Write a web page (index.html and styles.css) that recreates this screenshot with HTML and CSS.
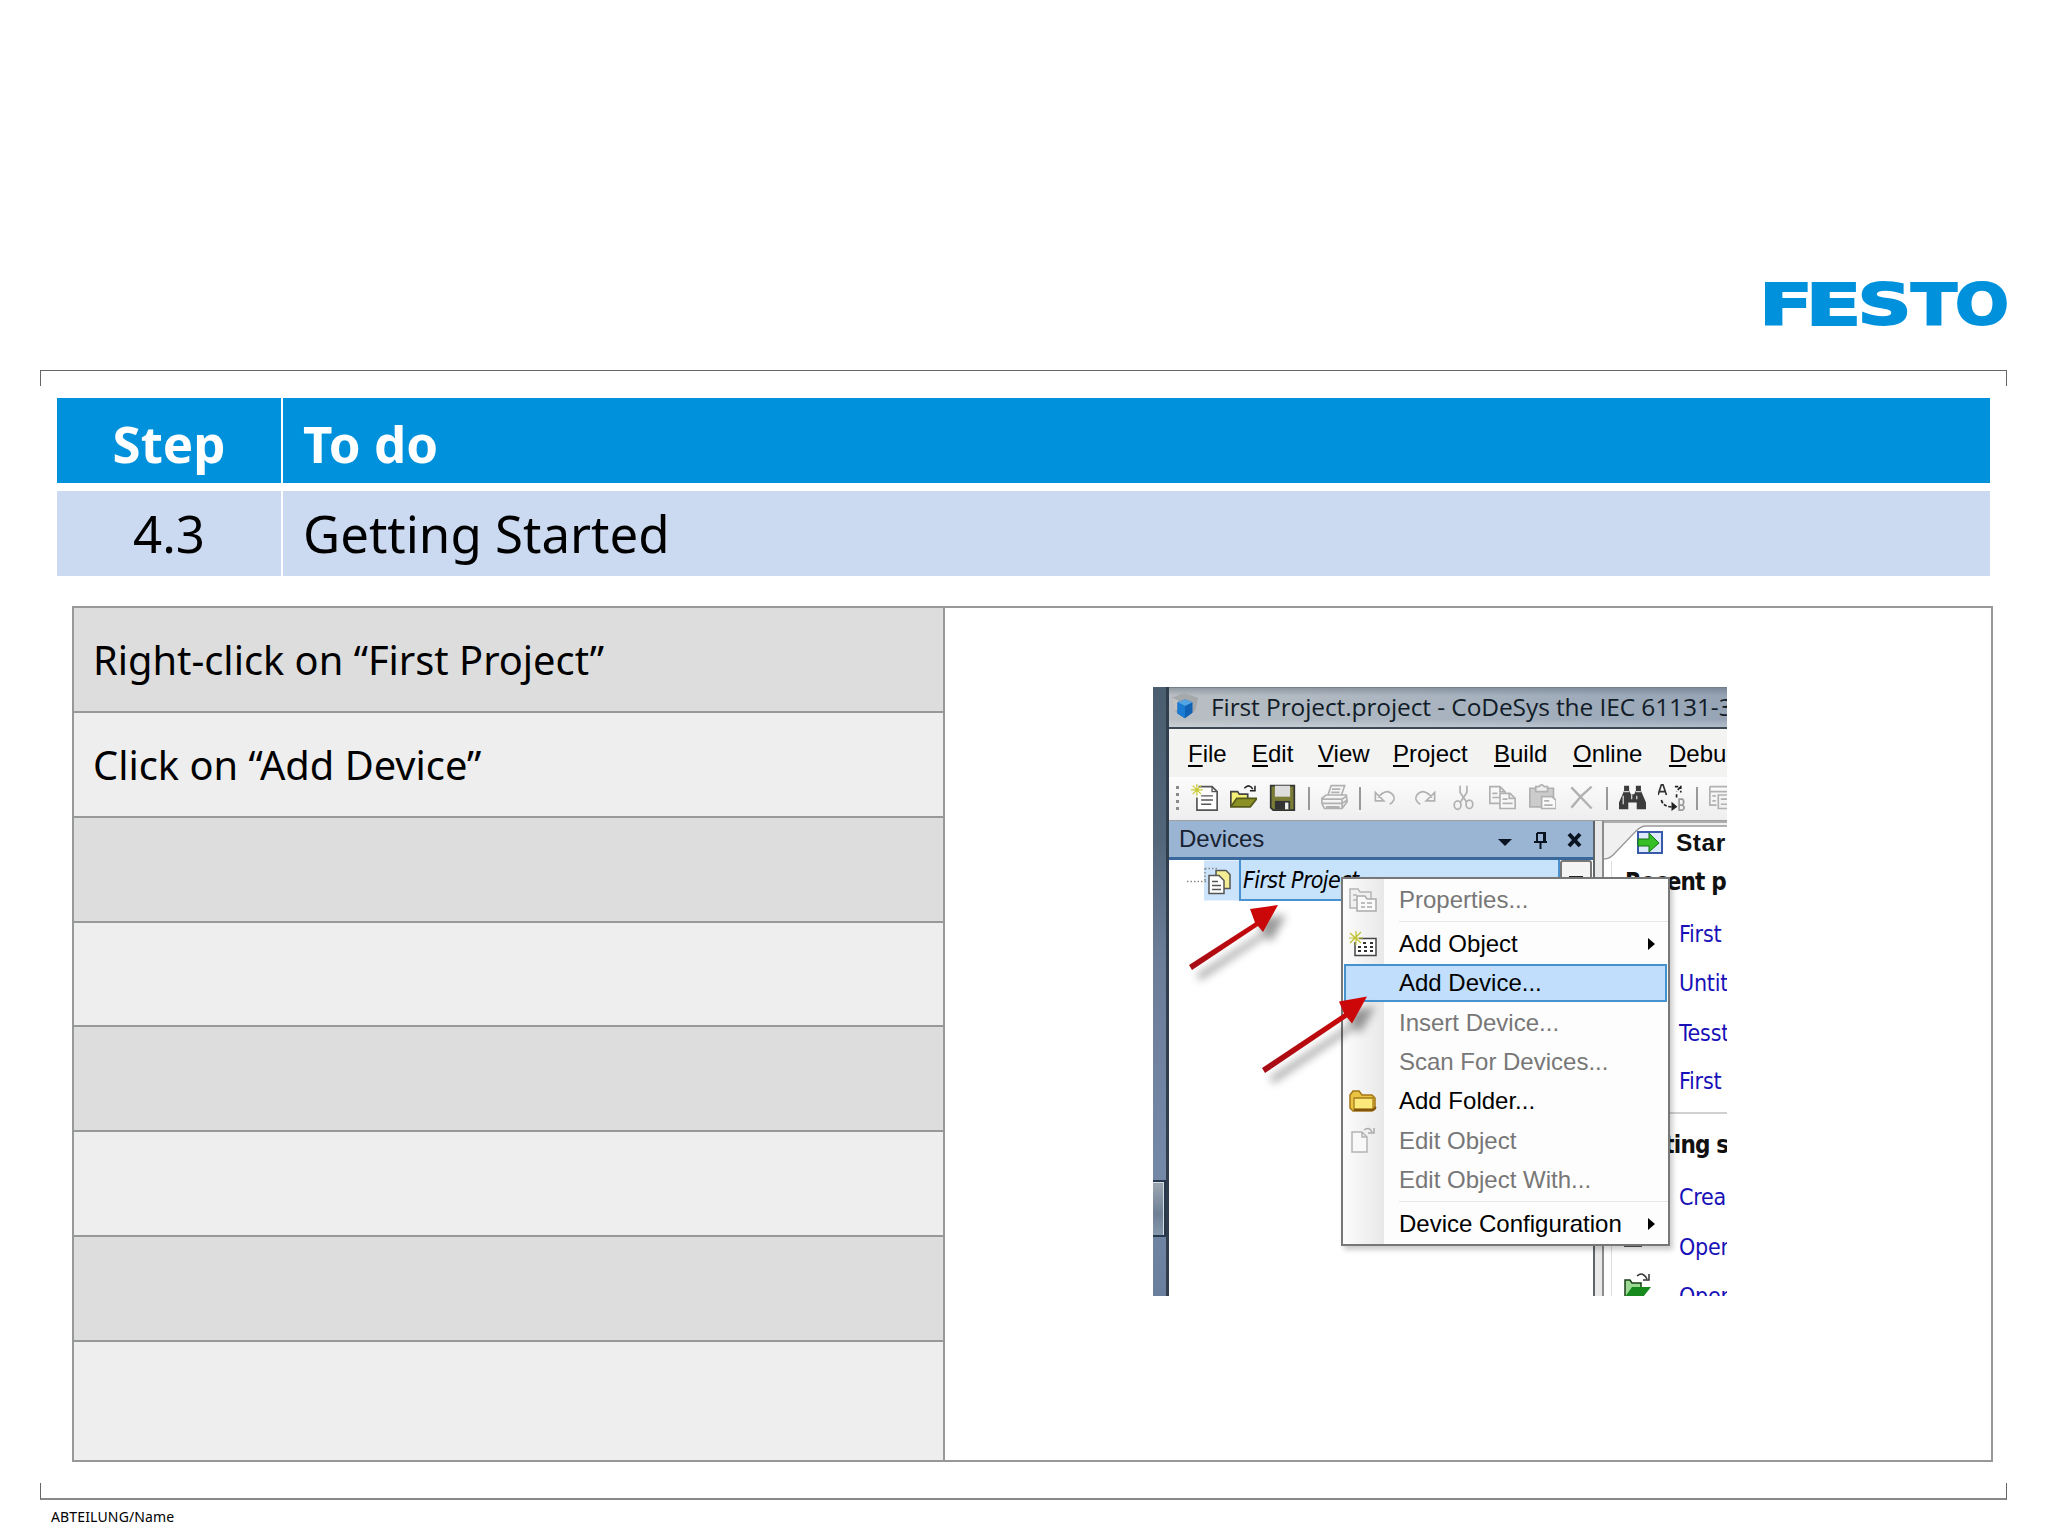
FILE: index.html
```html
<!DOCTYPE html>
<html lang="en">
<head>
<meta charset="utf-8">
<title>Getting Started</title>
<link rel="stylesheet" href="styles.css">
</head>
<body>
<main class="slide">
  <header class="brand">
    <svg class="logo" viewBox="0 0 244 46" role="img" aria-label="FESTO">
      <g class="logo-text">
        <text x="-4" y="43.800" textLength="54" lengthAdjust="spacingAndGlyphs">F</text>
        <text x="42.500" y="43.800" textLength="56" lengthAdjust="spacingAndGlyphs">E</text>
        <text x="94.500" y="43.800" textLength="54" lengthAdjust="spacingAndGlyphs">S</text>
        <text x="148" y="43.800" textLength="46" lengthAdjust="spacingAndGlyphs">T</text>
        <text x="192" y="43.800" textLength="54" lengthAdjust="spacingAndGlyphs">O</text>
      </g>
    </svg>
  </header>
  <div class="bracket bracket-top"></div>
  <section class="steps">
    <div class="cell head center">Step</div><div class="cell head">To do</div>
    <div class="cell center">4.3</div><div class="cell">Getting Started</div>
  </section>
  <section class="board">
    <div class="tasks">
      <div class="task">Right-click on “First Project”</div>
      <div class="task">Click on “Add Device”</div>
      <div class="task"></div><div class="task"></div><div class="task"></div>
      <div class="task"></div><div class="task"></div><div class="task"></div>
    </div>
    <div class="figure">
      <div class="app">
        <div class="edge"><div class="edge-block"></div></div>
        <div class="window">
          <div class="titlebar">
            <svg class="cube" viewBox="0 0 32 32"><path d="M2 6L15 1l15 5-3 14-12 8L5 20z" fill="#a5a9ac"/><path d="M2 6l7 3v10l-4 1z" fill="#c2c2c0"/><path d="M8 11l8-3 8 3v11l-8 6-8-5z" fill="#1262b4"/><path d="M8 11l8-3 8 3-8 4z" fill="#54a5e4"/><path d="M8 11l8 4v13l-8-5z" fill="#1a7bd3"/></svg>
            <span>First Project.project - CoDeSys the IEC 61131-3</span>
          </div>
          <nav class="menubar"><span><u>F</u>ile</span><span><u>E</u>dit</span><span><u>V</u>iew</span><span><u>P</u>roject</span><span><u>B</u>uild</span><span><u>O</u>nline</span><span><u>D</u>ebu</span></nav>
          <div class="toolbar">
            <div class="grip"></div>
            <i><svg viewBox="0 0 16 16"><path d="M4.500 1.500h8l3 3v11h-12V8" fill="#fff" stroke="#555"/><path d="M12.500 1.500v3h3M6 7h7M6 9.500h7M6 12h6" fill="none" stroke="#555" stroke-width=".8"/><path d="M3.500 0v7M0 3.500h7M1 1l5 5M6 1L1 6" stroke="#c9c832" stroke-width=".7"/></svg></i>
            <i><svg viewBox="0 0 16 16"><path d="M.5 13.500v-9h4l1 1.500h5v3" fill="#f5ef78" stroke="#444"/><path d="M.5 13.500L4 8.500h12l-4 5z" fill="#8b9025" stroke="#55591a"/><path d="M8.500 2.500q3-3 5 .5M14.800 1v3h-3" fill="none" stroke="#222" stroke-width=".9"/></svg></i>
            <i><svg viewBox="0 0 16 16"><path d="M1 1h14v14.500H2.500L1 14z" fill="#7b7d36" stroke="#333"/><path d="M3.500 1h9v6.500h-9z" fill="#ddd"/><path d="M3.500 10h9v5h-9z" fill="#333"/><path d="M9.500 11h2v4h-2z" fill="#eee"/></svg></i>
            <b></b>
            <i><svg class="dim" viewBox="0 0 16 16"><path d="M4 7l2-6h8l-2 6M6.500 3h5M6 5h5M.5 8.500L3 6.500h12l.5 4-3 4H2l-1.500-3zM.5 9h12l3-2M1 11.500h11.500l3-2M3 13.500h8M12.500 9v5"/></svg></i>
            <b></b>
            <i><svg class="dim" viewBox="0 0 16 16"><path d="M3.500 8q5-6 9-1.500 2 3-2 5.500M2 5v5h5z"/></svg></i>
            <i><svg class="dim" viewBox="0 0 16 16"><path d="M12.500 8q-5-6-9-1.500-2 3 2 5.500M14 5v5H9z"/></svg></i>
            <i><svg class="dim" viewBox="0 0 16 16"><path d="M6 1v4l4 6M10 1v4l-4 6"/><ellipse cx="4.500" cy="12.500" rx="2" ry="2.500"/><ellipse cx="11.500" cy="12" rx="2" ry="2.500"/></svg></i>
            <i><svg class="dim" viewBox="0 0 16 16"><path d="M.5 1.500h6l3 3v7h-9zM6.500 1.500v3h3M2 5.500h3M2 8h5"/><path d="M6.500 5.500h6l3 3v6h-9z" fill="#f7f7f7"/><path d="M12 5.500v3h3M8 9h3M8 11.500h6"/></svg></i>
            <i><svg class="dim" viewBox="0 0 16 16"><path d="M.5 2.500h14v11H.5z" fill="#ccc"/><path d="M4 4.500v-3h2q1.500-2 3 0h2v3z" fill="#eee"/><path d="M7.500 7.500h6l2.500 2v5H7.500z" fill="#fafafa"/><path d="M9 10h3M9 12.500h5"/></svg></i>
            <i><svg class="dim" viewBox="0 0 16 16"><path d="M2 2l12 12.500M14 1.500L8 7 2 14" stroke-width="1.400"/></svg></i>
            <b></b>
            <i><svg viewBox="0 0 16 16"><path d="M3 1h3v3l1 2h2l1-2V1h3v3l3 7v4h-5.500v-4h-5v4H0v-4l3-7z" fill="#3c3c3c"/><path d="M3 4.500h3M10 4.500h3M2.500 7v5M10.500 7v2M7.500 6v3" stroke="#d0d0d0" stroke-width=".8"/></svg></i>
            <i><svg viewBox="0 0 16 16"><path d="M0 6.500L2 .5h1l2 6M1 4.500h3" fill="none" stroke="#333"/><path d="M10 1.500h3.500V5M13 2l-2 2.500M11 6v2M2 9.500q1 4 6 4" fill="none" stroke="#222" stroke-dasharray="2 1"/><path d="M8 10.500l3.500 3-3.500 2.500z" fill="#222"/><path d="M12.500 9v6.500h2q2-1.500 0-3h-2 2q1.500-2 0-3.500z" fill="none" stroke="#999"/></svg></i>
            <b></b>
            <i><svg class="dim" viewBox="0 0 16 16"><path d="M.5 1.500h12v4M.5 1.500v11h4M.5 4.500h12M5.500 6.500h10v8h-10zM7 9h7M7 12h7M2 7h2M2 10h2"/></svg></i>
          </div>
          <div class="work">
            <div class="devices">
              <div class="pane-head"><span>Devices</span>
                <svg viewBox="0 0 90 24"><path d="M1 11h14l-7 7z" fill="#0b1522"/><path d="M40 5h8v9M40 5v9M37 14h13M43.500 14v7M47 5v9" fill="none" stroke="#0b1522" stroke-width="2"/><path d="M72 6l11 12M83 6L72 18" stroke="#0b1522" stroke-width="4"/></svg>
              </div>
              <div class="tree">
                <svg class="node" viewBox="0 0 53 40"><path d="M18 0h35v40H18z" fill="#cbe4fb"/><path d="M1 21h20M19 8h13M19 8v12" fill="none" stroke="#888" stroke-width="1.500" stroke-dasharray="1.500 2"/><path d="M30 10h10l4 4v14H30z" fill="#f3ee93" stroke="#555" stroke-width="1.500"/><path d="M23 15h10l5 5v13H23z" fill="#fff" stroke="#555" stroke-width="1.500"/><path d="M26 21h6M26 25h9M26 29h9" stroke="#555" stroke-width="1.500"/></svg>
                <div class="node-name">First Project</div>
                <div class="drop"></div>
              </div>
            </div>
            <div class="page">
              <svg class="tab" viewBox="0 0 124 40"><path d="M0 0h124v5H42q-4 0-8 4L10 33q-5 5-10 5z" fill="#f0f0f0"/><path d="M0 1h124" stroke="#999" stroke-width="1.500"/><path d="M0 38q6 0 11-6L32 10q5-5 10-5h82" fill="none" stroke="#999" stroke-width="1.300"/><path d="M34 11h24v21H34z" fill="#dceafa" stroke="#3859ac" stroke-width="2"/><path d="M34 18h11v-6l10 10-10 9v-6H34z" fill="#35bf24" stroke="#167310"/></svg>
              <span class="t tab-name">Star</span>
              <span class="t recent">Recent p</span>
              <span class="t l1">First</span><span class="t l2">Untitl</span><span class="t l3">Tesst</span><span class="t l4">First</span>
              <hr>
              <span class="t getting">Getting s</span>
              <span class="t l5">Crea</span><span class="t l6">Open</span><span class="t l7">Open</span>
              <svg class="folder" viewBox="0 0 28 54"><path d="M0 3h18" stroke="#555" stroke-width="2"/><path d="M1 54V37h5l2 3h9v7" fill="#9bd992" stroke="#173f16" stroke-width="1.500"/><path d="M1 54l7-10h19l-8 10z" fill="#168a1c"/><path d="M13 33q6-5 10 3M25 31v6h-6" fill="none" stroke="#333" stroke-width="1.500"/></svg>
            </div>
          </div>
        </div>
        <div class="context">
          <div class="item off"><svg viewBox="0 0 28 26"><path d="M1 2h8l2 3h11v16H1zM4 8h4M4 13h4" fill="#f0f0f0" stroke="#b5b5b5" stroke-width="1.500"/><path d="M8 9h8l2 3h9v12H8z" fill="#fafafa" stroke="#aaa" stroke-width="1.500"/><path d="M12 16h4M18 16h5M12 20h4M18 20h5" stroke="#aaa" stroke-width="1.500"/></svg>Properties...</div>
          <div class="sep"></div>
          <div class="item sub"><svg viewBox="0 0 28 26"><path d="M10 7.500h17v17H6V11" fill="#fff" stroke="#444" stroke-width="1.500"/><path d="M14 12h3M21 12h3M9 16h3M15 16h3M21 16h3M9 20h3M15 20h3M21 20h3" stroke="#333" stroke-width="2"/><path d="M7 0v14M0 7h14M1 2l11 10M12 1L1 12" stroke="#bfc02e" stroke-width="1.200"/></svg>Add Object</div>
          <div class="item hot"><svg viewBox="0 0 28 26"></svg>Add Device...</div>
          <div class="item off"><svg viewBox="0 0 28 26"></svg>Insert Device...</div>
          <div class="item off"><svg viewBox="0 0 28 26"></svg>Scan For Devices...</div>
          <div class="item"><svg viewBox="0 0 28 26"><path d="M1 20V7l3-4h6l3 4h10l3 3v11l-3 2H4z" fill="#eac544" stroke="#a57619" stroke-width="1.500"/><path d="M5 10h19v11H5z" fill="#fbe97c" stroke="#a57b19" stroke-width="1.300"/><path d="M5 22h19l3-3" fill="none" stroke="#80560e" stroke-width="2"/></svg>Add Folder...</div>
          <div class="item off"><svg viewBox="0 0 28 26"><path d="M3 5h10l5 5v15H3zM13 5v5h5" fill="#f8f8f8" stroke="#b4b4b4" stroke-width="1.500"/><path d="M15 3q5-4 8 2M25 1v5h-6" fill="none" stroke="#aaa" stroke-width="1.500"/></svg>Edit Object</div>
          <div class="item off"><svg viewBox="0 0 28 26"></svg>Edit Object With...</div>
          <div class="sep"></div>
          <div class="item sub"><svg viewBox="0 0 28 26"></svg>Device Configuration</div>
        </div>
        <svg class="arrows" viewBox="0 0 574 609">
          <defs><linearGradient id="red" x1="0" y1="1" x2="1" y2="0"><stop offset="0" stop-color="#a50d16"/><stop offset="1" stop-color="#d20606"/></linearGradient></defs>
          <path d="M36 278l66-42.500-5-13.500 28-4-15 27-5-6L39 283z" fill="url(#red)"/>
          <path d="M109 381l82-54.500-5-12 28-5-15 27-5-6-82 55.500z" fill="url(#red)"/>
        </svg>
      </div>
    </div>
  </section>
  <div class="bracket bracket-bottom"></div>
  <footer class="foot">ABTEILUNG/Name</footer>
</main>
</body>
</html>
```
FILE: styles.css
```css
* { box-sizing: border-box; }
body { margin: 0; background: #fff; color: #000; font-family: "Noto Sans", sans-serif; }
.slide { width: 2048px; height: 1536px; overflow: hidden; display: flex; flex-direction: column; padding: 281px 41px 0 40px; }
.brand { display: flex; justify-content: flex-end; height: 89px; }
.logo { width: 244px; height: 46px; overflow: visible; }
.logo-text { font: bold 57.5px "DejaVu Sans", sans-serif; fill: #0091dc; stroke: #0091dc; stroke-width: 1.800px; }
.bracket { flex: none; height: 16px; border: 1px solid #666; }
.bracket-top { border-bottom: 0; }
.bracket-bottom { border-top: 0; border-bottom: 2px solid #888; margin-top: 21px; height: 17px; }
.steps { flex: none; margin: 12px 17px 0 17px; display: grid; grid-template-columns: 224px 1fr; grid-template-rows: 85px 85px; gap: 8px 2px; }
.cell { background: #ccdaf1; font-size: 51px; line-height: 85px; padding: 0 20px; white-space: nowrap; }
.cell.head { background: #0091dc; color: #fff; font-weight: 700; line-height: 90px; }
.cell.center { text-align: center; }
.board { flex: none; margin: 30px 14px 0 32px; height: 856px; border: 2px solid #979898; display: grid; grid-template-columns: 871px 1fr; }
.tasks { border-right: 2px solid #979898; display: grid; grid-template-rows: 105px 105px 105px 104px 105px 105px 105px 1fr; }
.task { font-size: 39.8px; padding: 0 19px; line-height: 103px; border-bottom: 2px solid #979898; background: #ddd; }
.task:nth-child(even) { background: #eee; }
.task:last-child { border-bottom: 0; }
.figure { padding: 79px 0 0 208px; }
.app { position: relative; width: 574px; height: 609px; overflow: hidden; display: flex; background: #fff; font: 24px "Liberation Sans", sans-serif; white-space: nowrap; }
.edge { width: 16px; flex: none; border-right: 3px solid #303d4c; background: linear-gradient(#4b5e70, #536679 25%, #6c7d99 45%, #7488a8 80%, #6a7e9e); padding-top: 493px; }
.edge-block { height: 57px; border: 2px solid #27384c; border-left: 0; background: linear-gradient(#9da8b2, #6f8096 60%, #8597ab); box-shadow: inset -1px 1px #d5dee5; }
.window { flex: none; width: 558px; display: flex; flex-direction: column; }
.titlebar { height: 42px; display: flex; align-items: center; background: linear-gradient(rgba(60,75,90,.3), transparent 20%, transparent 80%, rgba(240,245,250,.3)), linear-gradient(90deg, #b9bfc4, #a8b3bf 50%, #96a4b5); border-top: 1px solid #72808c; border-bottom: 2px solid #3c4854; font: 24.5px/36px "Open Sans", sans-serif; padding-bottom: 2px; color: #111c28; letter-spacing: -.1px; }
.cube { width: 30px; height: 30px; margin: 0 11px 0 1px; flex: none; }
.menubar { height: 48px; background: #f3f3f2; display: grid; grid-template-columns: 64px 66px 75px 101px 79px 96px 80px; padding-left: 19px; line-height: 50px; }
.menubar u { text-decoration-thickness: 2px; text-underline-offset: 3px; }
.toolbar { height: 44px; display: flex; align-items: center; background: linear-gradient(#fcfcfc, #eee); border-bottom: 1px solid #a0a0a0; }
.toolbar i { flex: none; width: 39.200px; display: flex; justify-content: center; }
.toolbar svg { width: 27px; height: 27px; position: relative; top: -1px; }
.toolbar b { flex: none; width: 12px; height: 23px; background: linear-gradient(#999, #999) center / 2px 100% no-repeat; }
.dim { fill: none; stroke: #b1b1b1; stroke-width: 1; }
.grip { width: 16px; height: 26px; background: repeating-linear-gradient(#8a8a8a 0 3px, transparent 3px 7px) 7px 0 / 3px 26px no-repeat; flex: none; }
.work { display: flex; height: 475px; }
.devices { width: 426px; border-right: 2px solid #5f6468; flex: none; }
.pane-head { height: 39px; background: #9ab4d3; border-bottom: 3px solid #38689c; padding-left: 10px; display: flex; justify-content: space-between; align-items: center; line-height: 38px; color: #182231; }
.pane-head svg { width: 90px; height: 24px; margin: 2px 6px 0 0; }
.tree { display: flex; height: 41px; padding-left: 17px; }
.node { width: 53px; height: 41px; }
.node-name { width: 321px; border: 2px solid #4a91d2; border-top: 0; background: #c7e3fc; font: italic 23px "DejaVu Sans Condensed", "DejaVu Sans", sans-serif; line-height: 41px; padding-left: 2px; letter-spacing: -.6px; }
.drop { width: 32px; height: 30px; border: 2px solid #777; border-radius: 3px; background: linear-gradient(#222, #222) 50% 14px / 14px 2px no-repeat #f4f4f4; }
.page { position: relative; width: 132px; margin-left: 7px; border-left: 2px solid #8c8c8c; background: linear-gradient(90deg, transparent 7px, #ddd 7px 8px, transparent 8px) 0 40px no-repeat #fff; flex: none; }
.page::before { content: ""; position: absolute; left: -9px; top: 0; bottom: 0; width: 7px; background: #e9e9e9; }
.tab { position: absolute; left: 0; top: 0; width: 124px; height: 40px; }
.t { position: absolute; left: 75px; font: 23px/30px "DejaVu Sans Condensed", "DejaVu Sans", sans-serif; color: #1811b8; letter-spacing: -.2px; }
.t.tab-name { left: 72px; top: 7px; font: bold 24.5px/30px "Liberation Sans", sans-serif; color: #111; letter-spacing: .5px; }
.t.recent, .t.getting { font-weight: bold; font-size: 24px; color: #111; letter-spacing: -.8px; }
.t.recent { left: 21px; top: 46px; }
.t.getting { left: 20px; top: 309px; }
.l1 { top: 98px; } .l2 { top: 147px; } .l3 { top: 197px; } .l4 { top: 245px; }
.l5 { top: 361px; } .l6 { top: 411px; } .l7 { top: 460px; }
.page hr { position: absolute; left: 60px; right: 0; top: 291px; margin: 0; border: 0; border-top: 2px solid #d0d0d0; }
.folder { position: absolute; left: 20px; top: 422px; width: 28px; height: 54px; }
.context { position: absolute; left: 188px; top: 190px; width: 329px; height: 369px; border: 2px solid #777; padding-top: 1px; background: linear-gradient(90deg, #fcfcfc, #e8e8e8 41px, #fdfdfd 41px); box-shadow: 3px 4px 5px rgba(0,0,0,.2); }
.item { position: relative; height: 39.300px; line-height: 41px; display: flex; align-items: center; padding-left: 6px; }
.item svg { width: 28px; height: 26px; margin-right: 22px; flex: none; }
.off { color: #777; }
.hot { margin: 0 1px; padding-left: 3px; background: #c1dffd; border: 2px solid #4592cf; height: 38px; line-height: 36px; margin-bottom: 1px; }
.sub::after { content: ""; position: absolute; right: 13px; top: 14px; border: 6px solid transparent; border-left: 7px solid #000; border-right: 0; }
.sep { height: 5px; margin-left: 56px; background: linear-gradient(#e6e6e6, #e6e6e6) 0 2px / 100% 1px no-repeat; }
.arrows { position: absolute; left: 0; top: 0; width: 574px; height: 609px; filter: drop-shadow(8px 10px 4px rgba(0,0,0,.4)); }
.foot { margin: 8px 0 0 11px; font-size: 14px; line-height: 18px; letter-spacing: .15px; }
```
